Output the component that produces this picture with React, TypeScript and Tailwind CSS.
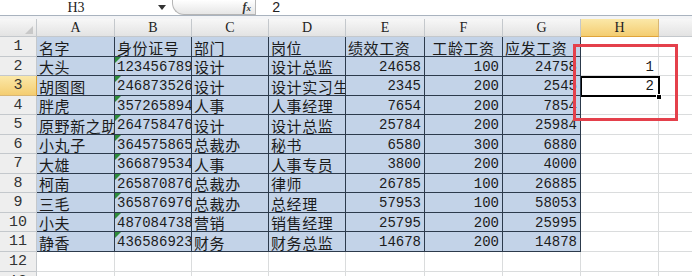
import React from 'react';

const colWidths = [78, 77, 77, 77, 79, 78, 78, 78];
const colLetters = ['A', 'B', 'C', 'D', 'E', 'F', 'G', 'H'];
const rowHeights = [20, 19, 20, 19, 20, 19, 20, 19, 20, 19, 20, 20, 20];

type Cell = string | number;

const data: Cell[][] = [
  ['名字', '身份证号', '部门', '岗位', '绩效工资', '工龄工资', '应发工资'],
  ['大头', '123456789', '设计', '设计总监', 24658, 100, 24758],
  ['胡图图', '246873526', '设计', '设计实习生', 2345, 200, 2545],
  ['胖虎', '357265894', '人事', '人事经理', 7654, 200, 7854],
  ['原野新之助', '264758476', '设计', '设计总监', 25784, 200, 25984],
  ['小丸子', '364575865', '总裁办', '秘书', 6580, 300, 6880],
  ['大雄', '366879534', '人事', '人事专员', 3800, 200, 4000],
  ['柯南', '265870876', '总裁办', '律师', 26785, 100, 26885],
  ['三毛', '365876976', '总裁办', '总经理', 57953, 100, 58053],
  ['小夫', '487084738', '营销', '销售经理', 25795, 200, 25995],
  ['静香', '436586923', '财务', '财务总监', 14678, 200, 14878],
];

const hValues: Record<number, number> = { 1: 1, 2: 2 };

const cjk = 'font-["Noto_Sans_CJK_SC",sans-serif] text-[15px] tracking-[0.6px]';
const mono = 'font-["Liberation_Mono",monospace] text-[14px]';

function FormulaBar() {
  return (
    <div className="flex h-[16px] items-stretch border-b border-[#a9b3bf] bg-white">
      <div className="flex w-[152px] items-center justify-center">
        <span className='font-["Liberation_Serif",serif] text-[14px] leading-none text-[#222]'>H3</span>
      </div>
      <div className="flex w-[20px] items-center justify-center">
        <svg width="8" height="5" viewBox="0 0 8 5">
          <path d="M0 0 L8 0 L4 5 Z" fill="#333" />
        </svg>
      </div>
      <div className="flex w-[83px] items-center justify-end rounded-bl-[12px] border-b border-l border-[#b5b5b5] bg-gradient-to-b from-[#ffffff] to-[#e6e6e6] pr-[4px]">
        <span className='font-["Liberation_Serif",serif] text-[12px] font-bold italic leading-none text-[#333]'>
          f<span className="text-[9px]">x</span>
        </span>
      </div>
      <div className="w-px bg-[#b8b8b8]" />
      <div className="flex flex-1 items-center pl-[16px]">
        <span className={`${mono} leading-none text-[#222]`}>2</span>
      </div>
    </div>
  );
}

function HeaderRow() {
  return (
    <div className="flex h-[18px]">
      <div className="relative w-[37px] shrink-0 border-b border-r border-[#c4c8cc] bg-gradient-to-b from-[#f7f7f7] to-[#e3e3e3]">
        <div className="absolute bottom-[2px] right-[3px] h-[8px] w-[8px] bg-[#c8c8c8] [clip-path:polygon(100%_0,100%_100%,0_100%)]" />
      </div>
      {colLetters.map((l, i) => {
        const sel = l === 'H';
        return (
          <div
            key={l}
            style={{ width: colWidths[i] }}
            className={`flex shrink-0 items-center justify-center border-b border-r font-["Liberation_Serif",serif] text-[14px] text-[#222] ${
              sel
                ? 'border-b-[#e0a43a] border-r-[#d9b774] bg-gradient-to-b from-[#fbe8a8] to-[#f4cd70]'
                : 'border-[#c4c8cc] bg-gradient-to-b from-[#f7f7f7] to-[#e3e3e3]'
            }`}
          >
            {l}
          </div>
        );
      })}
      <div className="flex-1 border-b border-[#c4c8cc] bg-gradient-to-b from-[#f7f7f7] to-[#e3e3e3]" />
    </div>
  );
}

function DataCell({ value, col, row }: { value: Cell; col: number; row: number }) {
  const isNum = typeof value === 'number';
  const isIdText = col === 1 && row > 0;
  const center = row === 0 && col === 5;
  let align = 'justify-start pl-[2px]';
  if (isNum) align = 'justify-end pr-[3px]';
  if (center) align = 'justify-center';
  return (
    <div
      style={{ width: colWidths[col] }}
      className={`relative flex shrink-0 items-center overflow-hidden whitespace-nowrap border-b border-r border-[#2c3a4c] bg-[#c3d3e8] text-[#1b1b1b] ${align} ${
        isNum || isIdText ? mono : cjk
      }`}
    >
      {isIdText && (
        <div className="absolute left-0 top-0 h-[6px] w-[6px] bg-[#2e8b3a] [clip-path:polygon(0_0,100%_0,0_100%)]" />
      )}
      <span className="leading-none pt-[1px]">{value}</span>
    </div>
  );
}

function EmptyCell({ col }: { col: number }) {
  return <div style={{ width: colWidths[col] }} className="shrink-0 border-b border-r border-[#dadcdd]" />;
}

function SheetRow({ index, height }: { index: number; height: number }) {
  const rowData = data[index - 1];
  const selected = index === 3;
  return (
    <div className="flex" style={{ height }}>
      <div
        className={`flex w-[37px] shrink-0 items-center justify-center border-b border-r ${mono} text-[#333] ${
          selected
            ? 'border-b-[#d9b774] border-r-[#e0a43a] bg-gradient-to-b from-[#fbe8a8] to-[#f4cd70]'
            : 'border-[#c4c8cc] bg-[#eeeeee]'
        }`}
      >
        <span className="text-[15px] leading-none">{index}</span>
      </div>
      {colWidths.slice(0, 7).map((_, c) =>
        rowData ? <DataCell key={c} value={rowData[c]} col={c} row={index - 1} /> : <EmptyCell key={c} col={c} />
      )}
      <div
        style={{ width: colWidths[7] }}
        className={`flex shrink-0 items-center justify-end border-b border-r border-[#dadcdd] pr-[4px] ${mono} text-[#1b1b1b]`}
      >
        <span className="leading-none pt-[1px]">{hValues[index - 1] ?? ''}</span>
      </div>
      <div className="flex-1 border-b border-[#dadcdd]" />
    </div>
  );
}

export default function App() {
  return (
    <div className="relative h-[276px] w-[692px] overflow-hidden bg-white">
      <FormulaBar />
      <div className="h-[3px] bg-[#f3f4f6]" />
      <HeaderRow />
      {rowHeights.map((h, i) => (
        <SheetRow key={i} index={i + 1} height={h} />
      ))}

      {/* selected cell H3 */}
      <div className="pointer-events-none absolute left-[581px] top-[76px] h-[21px] w-[79px] border-[2px] border-l border-black" />
      <div className="pointer-events-none absolute left-[656px] top-[94px] h-[6px] w-[6px] border border-white bg-black" />

      {/* red annotation box */}
      <div className="pointer-events-none absolute left-[573px] top-[44px] h-[77px] w-[105px] border-[3px] border-[#e4404b]" />
    </div>
  );
}
